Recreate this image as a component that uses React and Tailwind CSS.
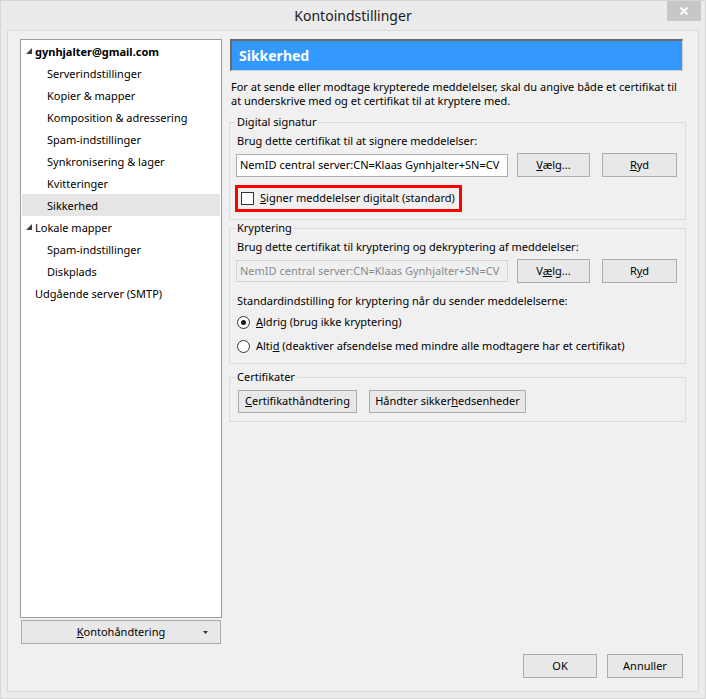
import React from 'react';

const FONT = { fontFamily: '"Noto Sans", "Open Sans", sans-serif' };

const TREE = [
  { label: 'gynhjalter@gmail.com', level: 0, bold: true, arrow: true },
  { label: 'Serverindstillinger', level: 1 },
  { label: 'Kopier & mapper', level: 1 },
  { label: 'Komposition & adressering', level: 1 },
  { label: 'Spam-indstillinger', level: 1 },
  { label: 'Synkronisering & lager', level: 1 },
  { label: 'Kvitteringer', level: 1 },
  { label: 'Sikkerhed', level: 1, selected: true },
  { label: 'Lokale mapper', level: 0, arrow: true },
  { label: 'Spam-indstillinger', level: 1 },
  { label: 'Diskplads', level: 1 },
  { label: 'Udgående server (SMTP)', level: 0 },
];

function Arrow() {
  return (
    <svg width="6" height="6" viewBox="0 0 6 6" className="mr-[3px]">
      <path d="M6 0 L6 6 L0 6 Z" fill="#404040" />
    </svg>
  );
}

function Btn({ children, className = '' }) {
  return (
    <div className={`border border-[#acacac] bg-[#e8e8e8] flex items-center justify-center text-black whitespace-nowrap ${className}`}>
      {children}
    </div>
  );
}

function Group({ title, children, className = '' }) {
  return (
    <div className={`relative border border-[#dcdcdc] ${className}`}>
      <div className="absolute left-[5px] top-[-8px] bg-[#f0f0f0] px-[2px] leading-[14px]">{title}</div>
      {children}
    </div>
  );
}

function Radio({ checked }) {
  return (
    <div className="w-[13px] h-[13px] rounded-full border border-[#333] bg-white flex items-center justify-center">
      {checked && <div className="w-[5px] h-[5px] rounded-full bg-[#1a1a1a]" />}
    </div>
  );
}

export default function App() {
  return (
    <div className="w-[706px] h-[699px] bg-[#ebebeb] border border-[#d6d6d6] flex flex-col text-[11px] text-black" style={FONT}>
      {/* title bar */}
      <div className="h-[29px] relative flex items-center justify-center">
        <span className="text-[14px] text-[#1a1a1a]">Kontoindstillinger</span>
        <div className="absolute right-[4px] top-0 w-[34px] h-[20px] bg-[#c7c7c7] flex items-center justify-center">
          <svg width="10" height="10" viewBox="0 0 10 10">
            <path d="M1.5 1.5 L8.5 8.5 M8.5 1.5 L1.5 8.5" stroke="#fff" strokeWidth="1.8" />
          </svg>
        </div>
      </div>

      {/* client area */}
      <div className="mx-[6px] mb-[6px] flex-1 bg-[#f0f0f0] border border-[#dadada] flex flex-col pt-[8px] pl-[12px] pr-[12px] pb-[13px]">
        <div className="flex flex-1">
          {/* left tree */}
          <div className="w-[202px] flex flex-col">
            <div className="flex-1 bg-white border border-[#9c9c9c] px-[1px]">
              {TREE.map((t, i) => (
                <div
                  key={i}
                  className={`h-[22px] flex items-center whitespace-nowrap ${t.selected ? 'bg-[#e5e5e5]' : ''} ${t.bold ? 'font-bold' : ''}`}
                  style={{ paddingLeft: t.level === 0 ? (t.arrow ? 4 : 13) : 25 }}
                >
                  {t.arrow && <Arrow />}
                  <span className="leading-none">{t.label}</span>
                </div>
              ))}
            </div>
            <div className="pt-[2px] px-[1px]">
              <Btn className="relative h-[24px]">
                <span><span className="underline">K</span>ontohåndtering</span>
                <svg width="5" height="3" viewBox="0 0 5 3" className="absolute right-[12px] top-[10px]">
                  <path d="M0 0 L5 0 L2.5 3 Z" fill="#333" />
                </svg>
              </Btn>
            </div>
          </div>

          {/* right pane */}
          <div className="flex-1 ml-[7px] flex flex-col">
            <div className="h-[32px] mr-[3px] ml-[1px] bg-[#3399ff] border-t-2 border-l-2 border-[#6a6a6a] border-r border-b border-r-[#d0d0d0] border-b-[#d0d0d0] flex items-center pl-[7px]">
              <span className="text-white font-bold text-[14px]">Sikkerhed</span>
            </div>
            <div className="mt-[9px] pl-[2px] leading-[14px]">
              For at sende eller modtage krypterede meddelelser, skal du angive både et certifikat til at underskrive med og et certifikat til at kryptere med.
            </div>

            <Group title="Digital signatur" className="mt-[14px] h-[98px]">
              <div className="pt-[11px] px-[7px]">
                <div className="leading-[14px]">Brug dette certifikat til at signere meddelelser:</div>
                <div className="flex mt-[5px] items-center">
                  <div className="w-[272px] ml-[-1px] h-[23px] bg-white border border-[#abadb3] flex items-center pl-[3px] overflow-hidden whitespace-nowrap">
                    NemID central server:CN=Klaas Gynhjalter+SN=CV
                  </div>
                  <Btn className="w-[73px] h-[24px] ml-[9px]"><span><span className="underline">V</span>ælg...</span></Btn>
                  <Btn className="w-[75px] h-[24px] ml-[12px]"><span><span className="underline">R</span>yd</span></Btn>
                </div>
                <div className="mt-[8px] ml-[-2px] w-[227px] h-[27px] border-[3px] border-[#ff0000] flex items-center pl-[3px] whitespace-nowrap">
                  <div className="w-[13px] h-[13px] border border-[#333] bg-white" />
                  <span className="ml-[6px]"><span className="underline">S</span>igner meddelelser digitalt (standard)</span>
                </div>
              </div>
            </Group>

            <Group title="Kryptering" className="mt-[8px] h-[136px]">
              <div className="pt-[11px] px-[7px]">
                <div className="leading-[14px]">Brug dette certifikat til kryptering og dekryptering af meddelelser:</div>
                <div className="flex mt-[5px] items-center">
                  <div className="w-[272px] ml-[-1px] h-[22px] bg-[#f0f0f0] border border-[#d4d4d4] text-[#8a8a8a] flex items-center pl-[3px] overflow-hidden whitespace-nowrap">
                    NemID central server:CN=Klaas Gynhjalter+SN=CV
                  </div>
                  <Btn className="w-[73px] h-[24px] ml-[9px]"><span>V<span className="underline">æ</span>lg...</span></Btn>
                  <Btn className="w-[75px] h-[24px] ml-[12px]"><span>R<span className="underline">y</span>d</span></Btn>
                </div>
                <div className="mt-[11px] leading-[14px]">Standardindstilling for kryptering når du sender meddelelserne:</div>
                <div className="flex items-center mt-[6px] h-[16px] whitespace-nowrap">
                  <Radio checked />
                  <span className="ml-[6px]"><span className="underline">A</span>ldrig (brug ikke kryptering)</span>
                </div>
                <div className="flex items-center mt-[8px] h-[16px] whitespace-nowrap">
                  <Radio />
                  <span className="ml-[6px]">Alti<span className="underline">d</span> (deaktiver afsendelse med mindre alle modtagere har et certifikat)</span>
                </div>
              </div>
            </Group>

            <Group title="Certifikater" className="mt-[13px] h-[45px]">
              <div className="pt-[12px] px-[8px] flex">
                <Btn className="w-[119px] h-[23px]"><span><span className="underline">C</span>ertifikathåndtering</span></Btn>
                <Btn className="w-[157px] h-[23px] ml-[12px]"><span>Håndter sikker<span className="underline">h</span>edsenheder</span></Btn>
              </div>
            </Group>
          </div>
        </div>

        {/* bottom buttons */}
        <div className="flex justify-end mt-[10px] pr-[3px]">
          <Btn className="w-[74px] h-[24px]">OK</Btn>
          <Btn className="w-[76px] h-[24px] ml-[10px]">Annuller</Btn>
        </div>
      </div>
    </div>
  );
}
